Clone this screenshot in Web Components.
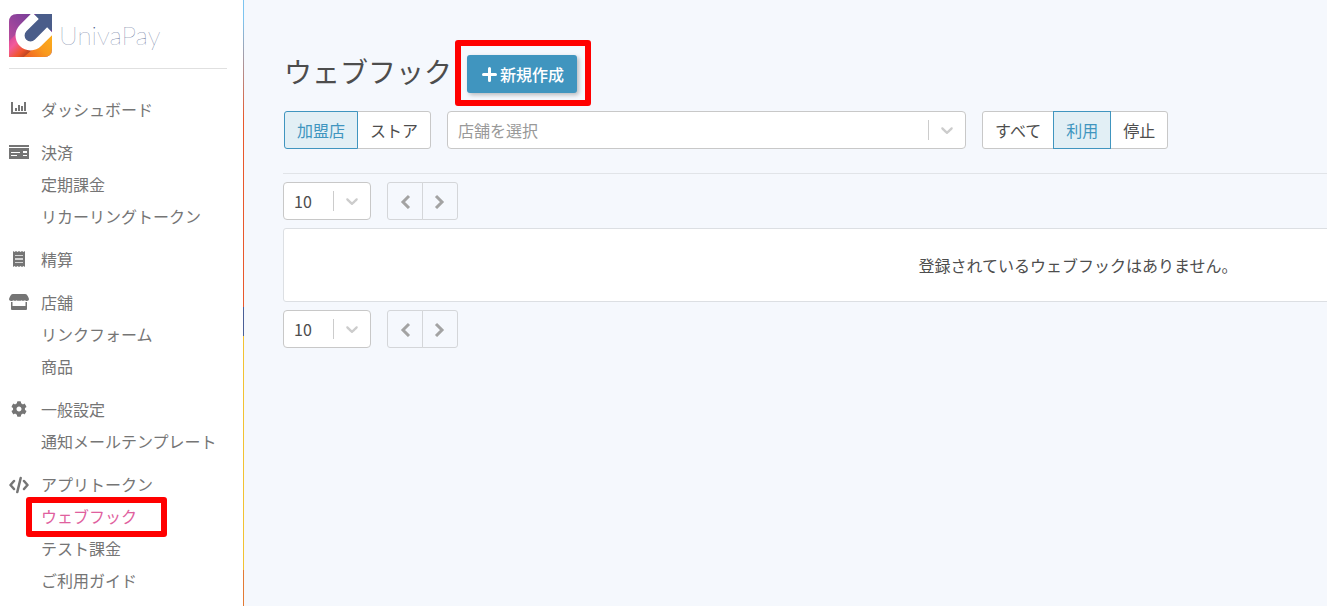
<!DOCTYPE html>
<html lang="ja">
<head>
<meta charset="utf-8">
<meta name="viewport" content="width=device-width, initial-scale=1">
<title>UnivaPay</title>
<style>
  body {
    margin: 0;
    background: #f5f8fd;
    color: #4d4d4d;
    font-family: "Noto Sans CJK JP", sans-serif;
    font-size: 16px;
    line-height: 24px;
    --accent: #4095bf;
    --accent-soft: #e2eff5;
    --border: #c8c8c8;
    --border-soft: #dcdfe3;
    --menu: #757575;
    --active: #e0609e;
    --mark: #ff0000;
  }
</style>
</head>
<body>
<app-shell>
  <side-menu slot="side">
    <menu-group icon="chart" label="ダッシュボード"></menu-group>
    <menu-group icon="card" label="決済">
      <menu-link>定期課金</menu-link>
      <menu-link>リカーリングトークン</menu-link>
    </menu-group>
    <menu-group icon="receipt" label="精算"></menu-group>
    <menu-group icon="store" label="店舗">
      <menu-link>リンクフォーム</menu-link>
      <menu-link>商品</menu-link>
    </menu-group>
    <menu-group icon="gear" label="一般設定">
      <menu-link>通知メールテンプレート</menu-link>
    </menu-group>
    <menu-group icon="code" label="アプリトークン">
      <menu-link active>ウェブフック</menu-link>
      <menu-link>テスト課金</menu-link>
      <menu-link>ご利用ガイド</menu-link>
    </menu-group>
  </side-menu>

  <page-header slot="head">
    ウェブフック
    <create-button slot="action">新規作成</create-button>
  </page-header>

  <filter-bar slot="head">
    <button-group options="加盟店,ストア" selected="加盟店"></button-group>
    <select-box class="grow" label="店舗" options="店舗を選択" placeholder></select-box>
    <button-group options="すべて,利用,停止" selected="利用"></button-group>
  </filter-bar>

  <list-pager></list-pager>
  <data-list empty="登録されているウェブフックはありません。"></data-list>
  <list-pager></list-pager>
</app-shell>

<script>
const ICONS = {
  chart: `<path d="M2 2h2v10h14v2H2z"/><path d="M6 8h2v3H6zM9 5h2v6H9zM12 6h2v5h-2zM15 2h2v9h-2z"/>`,
  card: `<path d="M0 2h20v2H0z"/>
    <path fill-rule="evenodd" d="M0 5h20v11H0zM2 9v1h9V9zM14 8v2h4V8zM2 12v1h6v-1zM14 12v1h4v-1z"/>`,
  receipt: `<path d="M4 1l1.500 1L7 1l1.500 1L10 1l1.500 1L13 1l1.500 1L16 1v16l-1.500-1-1.500 1-1.500-1-1.500 1-1.500-1L7 17l-1.500-1L4 17z"/>
    <path fill="#d4d4d4" d="M6 5h8v1H6zM6 8h8v2H6zM6 12h8v1H6z"/>`,
  store: `<path d="M4 1h12c2 0 3 2 4 5 0 1-1 2-2 2s-2 0-2.500-.7C15 8 13 8 12.500 7.300 12 8 8 8 7.500 7.300 7 8 5 8 4.500 7.300 4 8 3 8 2 8S0 7 0 6c1-3 2-5 4-5z"/>
    <path d="M2 9h1.500v4h13V9H18v7q0 1-1 1H3q-1 0-1-1z"/>`,
  gear: `<path transform="translate(2 1) scale(.03125)" d="M487.400 315.700l-42.600-24.600c4.300-23.200 4.300-47 0-70.200l42.600-24.600c4.900-2.800 7.100-8.600 5.500-14-11.100-35.600-30-67.800-54.700-94.600-3.800-4.100-10-5.100-14.800-2.300L380.800 110c-17.900-15.400-38.500-27.300-60.800-35.100V25.800c0-5.600-3.900-10.500-9.400-11.700-36.700-8.200-74.300-7.800-109.200 0-5.500 1.200-9.400 6.100-9.400 11.700V75c-22.200 7.900-42.800 19.800-60.800 35.100L88.700 85.500c-4.900-2.800-11-1.900-14.800 2.300-24.700 26.700-43.600 58.900-54.700 94.600-1.700 5.400.6 11.200 5.500 14L67.300 221c-4.300 23.200-4.300 47 0 70.200l-42.600 24.600c-4.900 2.800-7.100 8.600-5.500 14 11.100 35.600 30 67.800 54.700 94.600 3.800 4.100 10 5.100 14.800 2.300l42.600-24.600c17.900 15.400 38.500 27.300 60.800 35.100v49.200c0 5.600 3.900 10.500 9.400 11.700 36.700 8.200 74.300 7.800 109.200 0 5.500-1.200 9.400-6.100 9.400-11.700v-49.200c22.200-7.900 42.800-19.800 60.800-35.100l42.600 24.600c4.900 2.800 11 1.900 14.800-2.300 24.700-26.700 43.600-58.900 54.700-94.600 1.500-5.500-.7-11.300-5.600-14.100zM256 336c-44.100 0-80-35.900-80-80s35.900-80 80-80 80 35.900 80 80-35.900 80-80 80z"/>`,
  code: `<path fill="none" stroke="currentColor" stroke-width="2.500" stroke-linecap="round" stroke-linejoin="round" d="M5 6L1.500 10 5 14M15 6l3.500 4L15 14M11.700 3L8.300 17"/>`
};

class BaseElement extends HTMLElement {
  constructor() {
    super();
    this.attachShadow({ mode: 'open' });
  }

  connectedCallback() {
    this.shadowRoot.innerHTML = this.render();
  }
}

class AppShell extends BaseElement {
  render() {
    return `
      <style>
        :host { display: flex; min-height: 100vh; }
        .side {
          flex: none;
          box-sizing: border-box;
          width: 244px;
          background: #fff;
          border-right: 1px solid;
          border-image: linear-gradient(#7cc4f0 0, #7cc4f0 20px, #e8582c 120px, #e8582c 307px,
            #4a5f96 307px, #4a5f96 336px, #f2c232 336px, #f2c232 569px, #e37a35 569px) 1;
        }
        main { flex: 1; min-width: 0; overflow: hidden; padding-top: 55px; }
        .head { display: grid; gap: 18px; padding: 0 40px 24px; }
        .list {
          display: grid;
          gap: 8px;
          margin-left: 39px;
          padding-top: 8px;
          border-top: 1px solid #e1e4e8;
        }
      </style>
      <div class="side"><slot name="side"></slot></div>
      <main>
        <div class="head"><slot name="head"></slot></div>
        <div class="list"><slot></slot></div>
      </main>`;
  }
}

class BrandLogo extends BaseElement {
  render() {
    return `
      <style>
        :host { display: block; }
        a { display: flex; align-items: center; gap: 7px; color: #3c5080; text-decoration: none; }
        svg { width: 43px; height: 43px; }
        span { font: 100 26px/43px Lato, sans-serif; }
      </style>
      <a href="#">
        <svg viewBox="0 0 128 128" aria-hidden="true">
          <defs>
            <clipPath id="tile"><path d="M24 0H128V104Q128 128 104 128H0V24Q0 0 24 0z"/></clipPath>
            <linearGradient id="violet" x1="1" y1="0" x2="0" y2="1">
              <stop offset="0" stop-color="#5f3a94"/><stop offset=".5" stop-color="#93449c"/><stop offset="1" stop-color="#d2529c"/>
            </linearGradient>
            <linearGradient id="pink" gradientUnits="userSpaceOnUse" x1="10" y1="65" x2="72" y2="126">
              <stop offset="0" stop-color="#d84a98"/><stop offset=".25" stop-color="#f25a9c"/>
              <stop offset=".6" stop-color="#f0562c"/><stop offset="1" stop-color="#8c3414"/>
            </linearGradient>
            <linearGradient id="amber" gradientUnits="userSpaceOnUse" x1="60" y1="128" x2="128" y2="70">
              <stop offset="0" stop-color="#f26a24"/><stop offset=".5" stop-color="#f99a1e"/><stop offset="1" stop-color="#fbab1c"/>
            </linearGradient>
          </defs>
          <g clip-path="url(#tile)">
            <path fill="url(#violet)" d="M0 0h128v128H0z"/>
            <path fill="url(#pink)" d="M0 80L60 20l60 60-72 48H0z"/>
            <path fill="url(#amber)" d="M44 128l84-72v72z"/>
            <path fill="#4a5d8a" d="M82 0H128V46L86 86A31 31 0 0 1 42 42z"/>
            <path fill="none" stroke="#fff" stroke-width="27" d="M79 5L42 42A31 31 0 0 0 86 86L123 49"/>
          </g>
        </svg>
        <span>UnivaPay</span>
      </a>`;
  }
}

class SideMenu extends BaseElement {
  render() {
    return `
      <style>
        :host { display: block; padding: 14px 16px 8px 9px; }
        brand-logo { padding-bottom: 11px; border-bottom: 1px solid #e0e0e0; }
        nav { display: grid; gap: 11px; padding-top: 24px; }
      </style>
      <brand-logo></brand-logo>
      <nav><slot></slot></nav>`;
  }
}

class MenuGroup extends BaseElement {
  render() {
    return `
      <style>
        :host { display: block; color: var(--menu); line-height: 32px; }
        .top { display: flex; align-items: center; gap: 12px; color: inherit; text-decoration: none; }
        svg { width: 20px; height: 20px; margin-top: 2px; fill: currentColor; }
        .sub { padding-left: 32px; }
      </style>
      <a class="top" href="#">
        <svg viewBox="0 0 20 20" aria-hidden="true">${ICONS[this.getAttribute('icon')]}</svg>
        <span>${this.getAttribute('label')}</span>
      </a>
      <div class="sub"><slot></slot></div>`;
  }
}

class MenuLink extends BaseElement {
  render() {
    return `
      <style>
        :host { display: flex; }
        a { position: relative; color: inherit; text-decoration: none; white-space: nowrap; }
        :host([active]) a { color: var(--active); }
        /* red marker frame over the current page */
        :host([active]) a::after {
          content: "";
          position: absolute;
          inset: -3px -30px -5px -15px;
          border: 6px solid var(--mark);
          border-radius: 3px;
          pointer-events: none;
        }
      </style>
      <a href="#"><slot></slot></a>`;
  }
}

class PageHeader extends BaseElement {
  render() {
    return `
      <style>
        :host { display: flex; align-items: flex-start; gap: 15px; }
        h1 { margin: 0; font-size: 28px; font-weight: 400; line-height: 32px; }
      </style>
      <h1><slot></slot></h1>
      <slot name="action"></slot>`;
  }
}

class CreateButton extends BaseElement {
  render() {
    return `
      <style>
        :host { display: block; position: relative; }
        :host::after {
          content: "";
          position: absolute;
          inset: -15px -14px -13px -12px;
          border: 6px solid var(--mark);
          border-radius: 3px;
          pointer-events: none;
        }
        button {
          display: flex;
          align-items: center;
          gap: 3px;
          height: 38px;
          padding: 0 13px 0 15px;
          border: 0;
          border-radius: 3px;
          background: var(--accent);
          box-shadow: 2px 2px 4px rgba(0, 0, 0, .25);
          color: #fff;
          font: inherit;
          font-weight: 500;
          cursor: pointer;
        }
        svg { width: 15px; height: 15px; }
      </style>
      <button type="button">
        <svg viewBox="0 0 15 15" aria-hidden="true"><path d="M7.500 1.500v12M1.500 7.500h12" stroke="#fff" stroke-width="3" stroke-linecap="round"/></svg>
        <slot></slot>
      </button>`;
  }
}

class FilterBar extends BaseElement {
  render() {
    return `
      <style>
        :host { display: flex; gap: 16px; }
        ::slotted(.grow) { flex: 0 1 519px; }
      </style>
      <slot></slot>`;
  }
}

class ButtonGroup extends BaseElement {
  render() {
    const selected = this.getAttribute('selected');
    const buttons = this.getAttribute('options').split(',').map(text =>
      `<button type="button" aria-pressed="${text === selected}">${text}</button>`);
    return `
      <style>
        :host { display: flex; flex: none; }
        button {
          height: 38px;
          padding: 0 12px;
          border: 1px solid var(--border);
          background: #fff;
          color: inherit;
          font: inherit;
          cursor: pointer;
        }
        button + button { margin-left: -1px; }
        button:first-of-type { border-radius: 3px 0 0 3px; }
        button:last-of-type { border-radius: 0 3px 3px 0; }
        button[aria-pressed="true"] {
          z-index: 1;
          border-color: var(--accent);
          background: var(--accent-soft);
          color: var(--accent);
        }
      </style>
      ${buttons.join('')}`;
  }

  connectedCallback() {
    super.connectedCallback();
    const buttons = this.shadowRoot.querySelectorAll('button');
    buttons.forEach(button => {
      button.addEventListener('click', () => {
        buttons.forEach(b => b.setAttribute('aria-pressed', b === button));
      });
    });
  }
}

class SelectBox extends BaseElement {
  render() {
    const options = this.getAttribute('options').split(',').map(text => `<option>${text}</option>`);
    return `
      <style>
        :host { display: grid; color: #4d4d4d; }
        :host([placeholder]) { color: #999; }
        select, .arrow { grid-area: 1 / 1; }
        select {
          appearance: none;
          box-sizing: border-box;
          width: 100%;
          height: 38px;
          padding: 0 38px 0 10px;
          border: 1px solid var(--border);
          border-radius: 4px;
          background: #fff;
          color: inherit;
          font: inherit;
        }
        .arrow {
          display: flex;
          align-items: center;
          justify-self: end;
          align-self: center;
          height: 20px;
          padding: 0 9px 0 8px;
          border-left: 1px solid #ccc;
          pointer-events: none;
        }
        svg { width: 20px; height: 20px; fill: #ccc; }
      </style>
      <select aria-label="${this.getAttribute('label')}">${options.join('')}</select>
      <span class="arrow">
        <svg viewBox="0 0 20 20" aria-hidden="true"><path d="M4.516 7.548c0.436-0.446 1.043-0.481 1.576 0l3.908 3.747 3.908-3.747c0.533-0.481 1.141-0.446 1.574 0 0.436 0.445 0.408 1.197 0 1.615-0.406 0.418-4.695 4.502-4.695 4.502-0.217 0.223-0.502 0.335-0.787 0.335s-0.570-0.112-0.789-0.335c0 0-4.287-4.084-4.695-4.502s-0.436-1.170 0-1.615z"/></svg>
      </span>`;
  }
}

class ListPager extends BaseElement {
  render() {
    return `
      <style>
        :host { display: flex; gap: 16px; }
        select-box { width: 88px; }
        div { display: flex; }
        button {
          display: grid;
          place-items: center;
          width: 36px;
          height: 38px;
          padding: 0;
          border: 1px solid #d4d6d9;
          background: transparent;
        }
        button:first-of-type { border-radius: 3px 0 0 3px; }
        button:last-of-type { margin-left: -1px; border-radius: 0 3px 3px 0; }
        svg { width: 16px; height: 16px; fill: none; stroke: #a3a3a3; stroke-width: 3; }
      </style>
      <select-box label="表示件数" options="10"></select-box>
      <div>
        <button type="button" aria-label="前へ" disabled>
          <svg viewBox="0 0 16 16"><path d="M12 3L6 9l6 6"/></svg>
        </button>
        <button type="button" aria-label="次へ" disabled>
          <svg viewBox="0 0 16 16"><path d="M4 3l6 6-6 6"/></svg>
        </button>
      </div>`;
  }
}

class DataList extends BaseElement {
  render() {
    return `
      <style>
        :host { display: block; min-width: 1590px; }
        table {
          width: 100%;
          border: 1px solid var(--border-soft);
          border-radius: 3px;
          border-spacing: 0;
          background: #fff;
        }
        td { padding: 24px; text-align: center; }
      </style>
      <table><tbody><tr><td>${this.getAttribute('empty')}</td></tr></tbody></table>`;
  }
}

customElements.define('app-shell', AppShell);
customElements.define('brand-logo', BrandLogo);
customElements.define('side-menu', SideMenu);
customElements.define('menu-group', MenuGroup);
customElements.define('menu-link', MenuLink);
customElements.define('page-header', PageHeader);
customElements.define('create-button', CreateButton);
customElements.define('filter-bar', FilterBar);
customElements.define('button-group', ButtonGroup);
customElements.define('select-box', SelectBox);
customElements.define('list-pager', ListPager);
customElements.define('data-list', DataList);
</script>
</body>
</html>
